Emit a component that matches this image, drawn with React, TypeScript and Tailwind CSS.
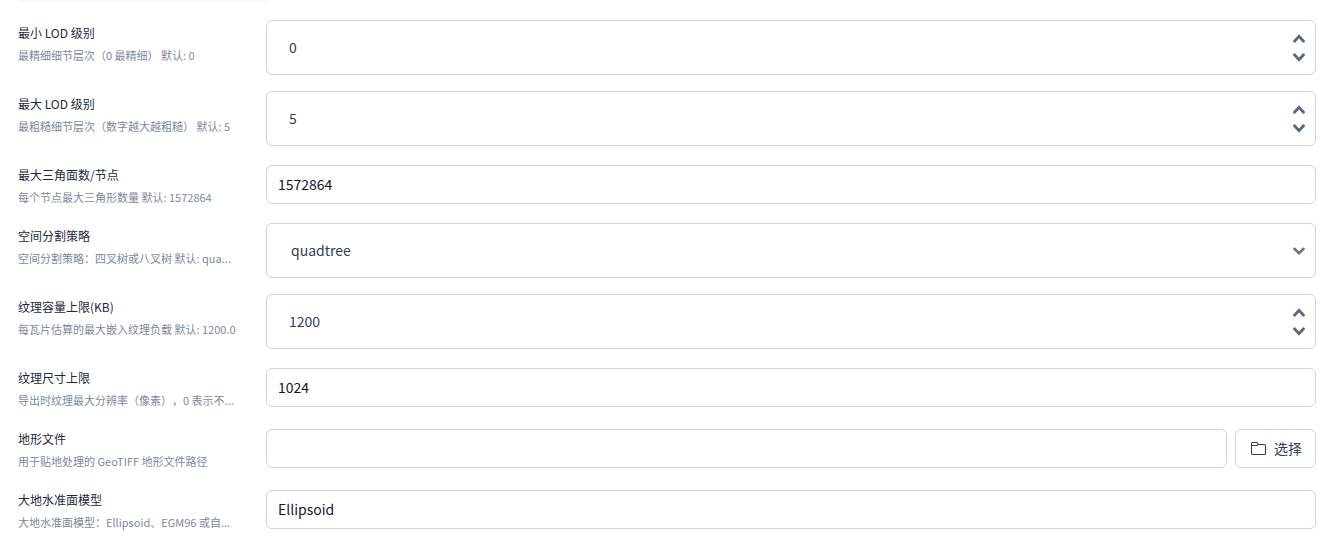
import type { ReactNode } from "react";

type Field = {
  id: string;
  label: string;
  hint: string;
  kind: "number" | "text" | "select" | "file";
  value: string;
};

const fields: Field[] = [
  { id: "min-lod", label: "最小 LOD 级别", hint: "最精细细节层次（0 最精细） 默认: 0", kind: "number", value: "0" },
  { id: "max-lod", label: "最大 LOD 级别", hint: "最粗糙细节层次（数字越大越粗糙） 默认: 5", kind: "number", value: "5" },
  { id: "max-triangles", label: "最大三角面数/节点", hint: "每个节点最大三角形数量 默认: 1572864", kind: "text", value: "1572864" },
  { id: "split", label: "空间分割策略", hint: "空间分割策略：四叉树或八叉树 默认: qua...", kind: "select", value: "quadtree" },
  { id: "texture-kb", label: "纹理容量上限(KB)", hint: "每瓦片估算的最大嵌入纹理负载 默认: 1200.0", kind: "number", value: "1200" },
  { id: "texture-size", label: "纹理尺寸上限", hint: "导出时纹理最大分辨率（像素），0 表示不...", kind: "text", value: "1024" },
  { id: "terrain", label: "地形文件", hint: "用于贴地处理的 GeoTIFF 地形文件路径", kind: "file", value: "" },
  { id: "geoid", label: "大地水准面模型", hint: "大地水准面模型：Ellipsoid、EGM96 或自...", kind: "text", value: "Ellipsoid" },
];

function Chevron({ up = false }: { up?: boolean }) {
  return (
    <svg className="block h-[9px] w-3" viewBox="0 0 12 9" fill="none" stroke="#566982" strokeWidth="2.8" strokeLinecap="round">
      <path d={up ? "M1.5 7.3 6 2.3 10.5 7.3" : "M1.5 1.7 6 6.7 10.5 1.7"} />
    </svg>
  );
}

function TextField({ id, value }: { id: string; value: string }) {
  return (
    <input
      id={id}
      type="text"
      defaultValue={value}
      className="h-[39px] w-full min-w-0 rounded-md border border-[#cbd5e1] bg-white px-[11px] pb-0.5 text-sm text-slate-900 outline-none"
    />
  );
}

function NumberField({ id, value }: { id: string; value: string }) {
  return (
    <div className="flex h-[55px] w-full items-center rounded-md border border-[#cbd5e1] bg-white pr-2.5 pl-[22px]">
      <input
        id={id}
        type="number"
        defaultValue={value}
        className="h-full min-w-0 flex-1 appearance-none pb-0.5 text-sm text-slate-700 outline-none [-moz-appearance:textfield] [&::-webkit-inner-spin-button]:appearance-none"
      />
      <div className="flex flex-col gap-2.5">
        <button type="button" aria-label="增加">
          <Chevron up />
        </button>
        <button type="button" aria-label="减少">
          <Chevron />
        </button>
      </div>
    </div>
  );
}

function SelectField({ id, value }: { id: string; value: string }) {
  return (
    <div className="grid w-full items-center">
      <select
        id={id}
        defaultValue={value}
        className="col-start-1 row-start-1 h-[55px] w-full appearance-none rounded-md border border-[#cbd5e1] bg-white px-6 pb-0.5 text-sm text-slate-700 outline-none"
      >
        <option value="quadtree">quadtree</option>
        <option value="octree">octree</option>
      </select>
      <span className="pointer-events-none col-start-1 row-start-1 mr-[11px] justify-self-end">
        <svg className="block h-2 w-3" viewBox="0 0 12 8" fill="none" stroke="#64748b" strokeWidth="2.6" strokeLinecap="round">
          <path d="M1.5 1.8 6 6.2 10.5 1.8" />
        </svg>
      </span>
    </div>
  );
}

function FileField({ id, value }: { id: string; value: string }) {
  return (
    <div className="flex w-full gap-2">
      <TextField id={id} value={value} />
      <button
        type="button"
        className="flex h-[39px] shrink-0 items-center gap-[7px] rounded-md border border-[#d3d5e1] bg-white pr-[13px] pb-0.5 pl-[15px] text-sm text-slate-700"
      >
        <svg className="size-4" viewBox="0 0 16 16" fill="none" stroke="#334155" strokeWidth="1.1">
          <path d="M.5 13.5v-10a1 1 0 0 1 1-1H6l1.5 2h6a1 1 0 0 1 1 1v8a1 1 0 0 1-1 1h-12a1 1 0 0 1-1-1ZM.5 5.5H6l1.5-1" />
        </svg>
        选择
      </button>
    </div>
  );
}

function Row({ field, children }: { field: Field; children: ReactNode }) {
  return (
    <div className="flex items-center gap-7">
      <div className="flex w-[220px] shrink-0 flex-col gap-1 self-start pt-1 pb-px whitespace-nowrap [text-spacing-trim:space-all]">
        <label htmlFor={field.id} className="text-xs leading-[18px] text-slate-800">
          {field.label}
        </label>
        <p className="text-[11px] leading-[18px] text-[#7c899c]">{field.hint}</p>
      </div>
      <div className="min-w-0 flex-1">{children}</div>
    </div>
  );
}

export default function App() {
  return (
    <main className="bg-white pr-[17px] pb-2.5 pl-[18px] font-['Noto_Sans_CJK_SC',sans-serif]">
      {/* bottom edge of the section header above */}
      <div className="h-0.5 w-[250px] rounded-b-sm bg-[#f9f9fa]" />
      <form className="flex flex-col gap-4 pt-[18px]">
        {fields.map((f) => (
          <Row key={f.id} field={f}>
            {f.kind === "number" && <NumberField id={f.id} value={f.value} />}
            {f.kind === "text" && <TextField id={f.id} value={f.value} />}
            {f.kind === "select" && <SelectField id={f.id} value={f.value} />}
            {f.kind === "file" && <FileField id={f.id} value={f.value} />}
          </Row>
        ))}
      </form>
    </main>
  );
}
